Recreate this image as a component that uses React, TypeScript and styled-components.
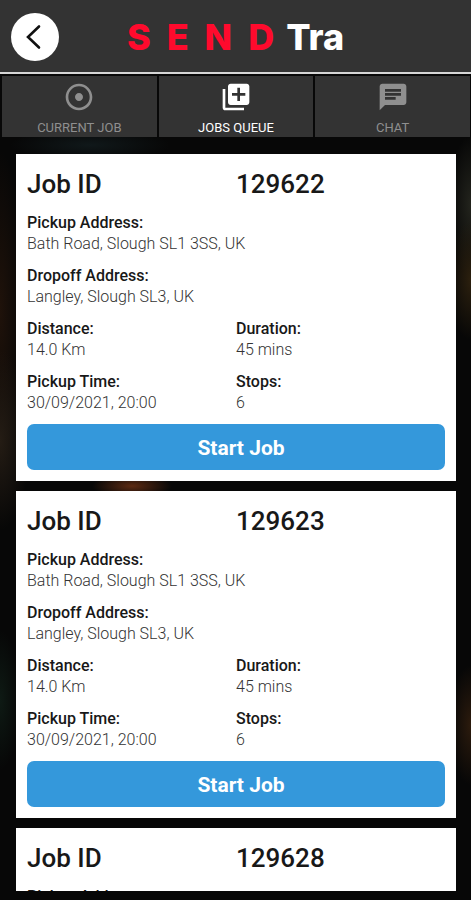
import React from "react";
import styled, { createGlobalStyle } from "styled-components";
import { MdAdjust, MdChat, MdLibraryAdd } from "react-icons/md";

const GlobalStyle = createGlobalStyle`
  * { box-sizing: border-box; }
  body {
    margin: 0;
    background: #070707;
    font-family: Roboto, "Liberation Sans", sans-serif;
  }
  button { font-family: inherit; }
`;

const Screen = styled.div`
  display: flex;
  flex-direction: column;
  height: 100vh;
  background:
    radial-gradient(ellipse 40px 12px at 132px 486px, #5c2a12, transparent),
    radial-gradient(ellipse 24px 60px at 100% 280px, #2c200e, transparent),
    radial-gradient(ellipse 22px 70px at 100% 205px, #23241d, transparent),
    radial-gradient(ellipse 30px 90px at 0 440px, #241c14, transparent),
    radial-gradient(ellipse 24px 160px at 0 310px, #1f120a, transparent),
    radial-gradient(ellipse 22px 60px at 100% 725px, #2c1b0d, transparent),
    radial-gradient(ellipse 20px 70px at 0 700px, #0e1a14, transparent),
    radial-gradient(ellipse 80px 16px at 90px 145px, #10181a, transparent),
    #070707;
`;

const Header = styled.header`
  display: grid;
  grid-template-columns: 48px 1fr 48px;
  align-items: center;
  flex: none;
  height: 74px;
  padding: 2px 11px 0;
  background: #333333;
  border-bottom: 2px solid #d6d6d6;
`;

const BackButton = styled.button`
  display: grid;
  place-items: center;
  width: 48px;
  height: 48px;
  padding: 0;
  border: 0;
  border-radius: 50%;
  background: #ffffff;
  color: #111111;
`;

const Logo = styled.h1`
  display: flex;
  justify-content: center;
  align-items: center;
  gap: 12px;
  margin: 0;
  font-family: Inter, Roboto, sans-serif;
  font-size: 36px;
  line-height: 48px;
  font-weight: 800;
  color: #ffffff;
`;

const LogoSpaced = styled.span`
  display: flex;
  gap: 16px;
  color: #ff0a2d;
`;

const Tabs = styled.nav`
  display: grid;
  grid-template-columns: repeat(3, 1fr);
  gap: 2px;
  flex: none;
  padding: 2px 1px 0 2px;
  background: #080808;
`;

const Tab = styled.button<{ $active?: boolean }>`
  display: flex;
  flex-direction: column;
  align-items: center;
  gap: 7px;
  padding: 5px 0 1px;
  border: 0;
  background: #333333;
  color: ${(p) => (p.$active ? "#ffffff" : "#8f8f8f")};
  font-size: 13px;
  line-height: 16px;
`;

const JobList = styled.main`
  display: flex;
  flex-direction: column;
  flex: 1;
  min-height: 0;
  padding: 17px 15px 9px 16px;
`;

const Scroller = styled.div`
  display: flex;
  flex-direction: column;
  gap: 10px;
  flex: 1;
  min-height: 0;
  overflow-y: auto;
  scrollbar-width: none;
`;

const Card = styled.article`
  flex: none;
  padding: 11px;
  background: #ffffff;
  color: #181818;
`;

const CardTitle = styled.h2`
  display: grid;
  grid-template-columns: 1fr 1fr;
  margin: 0 0 9px;
  font-size: 26px;
  line-height: 38px;
  font-weight: 500;
`;

const Details = styled.dl`
  display: grid;
  grid-template-columns: 1fr 1fr;
  row-gap: 11px;
  margin: 0 0 11px;
`;

const Field = styled.div<{ $wide?: boolean }>`
  grid-column: ${(p) => (p.$wide ? "1 / -1" : "auto")};
  font-size: 16px;
  line-height: 21px;
`;

const Label = styled.dt`
  font-weight: 500;
`;

const Value = styled.dd`
  margin: 0;
  color: #333333;
  font-weight: 300;
`;

const StartButton = styled.button`
  display: block;
  width: 100%;
  height: 46px;
  padding: 2px 0 0 10px;
  border: 0;
  border-radius: 7px;
  background: #3498db;
  color: #ffffff;
  font-size: 21px;
  line-height: 44px;
  font-weight: 700;
`;

const fields = [
  { label: "Pickup Address:", value: "Bath Road, Slough SL1 3SS, UK", wide: true },
  { label: "Dropoff Address:", value: "Langley, Slough SL3, UK", wide: true },
  { label: "Distance:", value: "14.0 Km" },
  { label: "Duration:", value: "45 mins" },
  { label: "Pickup Time:", value: "30/09/2021, 20:00" },
  { label: "Stops:", value: "6" },
];

function JobCard({ id }: { id: string }) {
  return (
    <Card>
      <CardTitle>
        <span>Job ID</span>
        <span>{id}</span>
      </CardTitle>
      <Details>
        {fields.map((f) => (
          <Field key={f.label} $wide={f.wide}>
            <Label>{f.label}</Label>
            <Value>{f.value}</Value>
          </Field>
        ))}
      </Details>
      <StartButton type="button">Start Job</StartButton>
    </Card>
  );
}

export default function App() {
  return (
    <>
      <GlobalStyle />
      <Screen>
        <Header>
          <BackButton type="button" aria-label="Back">
            <svg width="24" height="28" viewBox="0 0 24 28" fill="none" stroke="currentColor" strokeWidth="2.6" strokeLinecap="round">
              <path d="M16 3.5 5 14l11 10.5" />
            </svg>
          </BackButton>
          <Logo>
            <LogoSpaced>
              <span>S</span>
              <span>E</span>
              <span>N</span>
              <span>D</span>
            </LogoSpaced>
            <span>Tra</span>
          </Logo>
        </Header>
        <Tabs>
          <Tab type="button">
            <MdAdjust size={32} />
            CURRENT JOB
          </Tab>
          <Tab type="button" $active aria-current="page">
            <MdLibraryAdd size={32} />
            JOBS QUEUE
          </Tab>
          <Tab type="button">
            <MdChat size={32} />
            CHAT
          </Tab>
        </Tabs>
        <JobList>
          <Scroller>
            <JobCard id="129622" />
            <JobCard id="129623" />
            <JobCard id="129628" />
          </Scroller>
        </JobList>
      </Screen>
    </>
  );
}
